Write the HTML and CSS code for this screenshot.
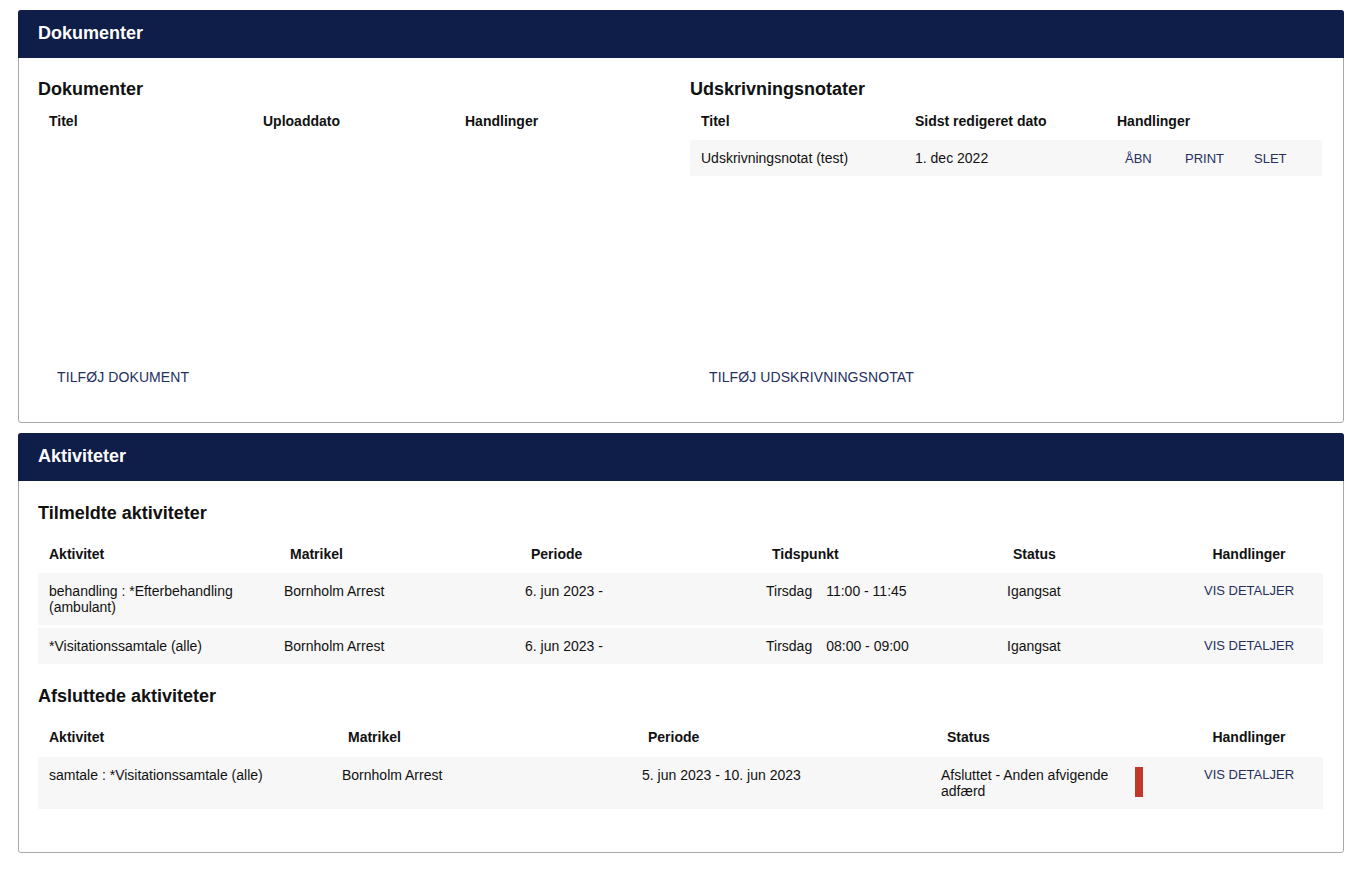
FILE: index.html
```html
<!DOCTYPE html>
<html lang="da">
<head>
<meta charset="utf-8">
<title>Dokumenter og aktiviteter</title>
<link rel="stylesheet" href="styles.css">
</head>
<body>
<section class="panel">
  <header class="panel-head">Dokumenter</header>
  <div class="panel-body docs">
    <div class="doc-col">
      <h3 class="sub">Dokumenter</h3>
      <div class="dtable">
        <div class="drow dhead"><span>Titel</span><span>Uploaddato</span><span>Handlinger</span></div>
      </div>
      <a class="add-link">TILFØJ DOKUMENT</a>
    </div>
    <div class="doc-col">
      <h3 class="sub">Udskrivningsnotater</h3>
      <div class="dtable">
        <div class="drow dhead"><span>Titel</span><span>Sidst redigeret dato</span><span>Handlinger</span></div>
        <div class="drow dbody"><span>Udskrivningsnotat (test)</span><span>1. dec 2022</span><span class="acts"><a>ÅBN</a><a>PRINT</a><a>SLET</a></span></div>
      </div>
      <a class="add-link">TILFØJ UDSKRIVNINGSNOTAT</a>
    </div>
  </div>
</section>

<section class="panel">
  <header class="panel-head">Aktiviteter</header>
  <div class="panel-body acts-body">
    <h3 class="sub">Tilmeldte aktiviteter</h3>
    <div class="atable t6">
      <div class="arow ahead"><span>Aktivitet</span><span>Matrikel</span><span>Periode</span><span>Tidspunkt</span><span>Status</span><span class="c">Handlinger</span></div>
      <div class="arow abody"><span>behandling : *Efterbehandling (ambulant)</span><span>Bornholm Arrest</span><span>6. jun 2023 -</span><span>Tirsdag<i class="sp"></i>11:00 - 11:45</span><span>Igangsat</span><span class="c"><a>VIS DETALJER</a></span></div>
      <div class="arow abody"><span>*Visitationssamtale (alle)</span><span>Bornholm Arrest</span><span>6. jun 2023 -</span><span>Tirsdag<i class="sp"></i>08:00 - 09:00</span><span>Igangsat</span><span class="c"><a>VIS DETALJER</a></span></div>
    </div>
    <h3 class="sub sub2">Afsluttede aktiviteter</h3>
    <div class="atable t5">
      <div class="arow ahead"><span>Aktivitet</span><span>Matrikel</span><span>Periode</span><span>Status</span><span class="c">Handlinger</span></div>
      <div class="arow abody"><span>samtale : *Visitationssamtale (alle)</span><span>Bornholm Arrest</span><span>5. jun 2023 - 10. jun 2023</span><span class="status"><span class="st-text">Afsluttet - Anden afvigende adfærd</span><b class="flag"></b></span><span class="c"><a>VIS DETALJER</a></span></div>
    </div>
  </div>
</section>
</body>
</html>
```

FILE: styles.css
```css
* { box-sizing: border-box; }
body {
  margin: 0;
  padding: 10px 19px 0 18px;
  background: #fff;
  font-family: "Liberation Sans", Arial, sans-serif;
  font-size: 14px;
  color: #111;
}
a { color: #25305e; text-decoration: none; cursor: pointer; }

.panel {
  border: 1px solid #a9a9a9;
  border-radius: 3px;
  margin-bottom: 10px;
  background: #fff;
}
.panel-head {
  background: #0f1e48;
  color: #fff;
  font-weight: bold;
  font-size: 18px;
  height: 48px;
  line-height: 47px;
  padding-left: 20px;
  margin: -1px -1px 0 -1px;
  border-radius: 3px 3px 0 0;
}
.panel-body { padding: 0 20px 0 19px; }

.sub {
  margin: 0;
  font-size: 18px;
  font-weight: bold;
  color: #111;
  line-height: 22px;
}

/* Dokumenter */
.docs {
  display: grid;
  grid-template-columns: 632px 632px;
  column-gap: 20px;
  padding-top: 20px;
  height: 364px;
}
.doc-col { display: flex; flex-direction: column; }
.dtable { margin-top: 2px; }
.drow {
  display: grid;
  grid-template-columns: 214px 202px 1fr;
}
.drow span { padding-left: 11px; }
.dhead { font-weight: bold; height: 38px; align-items: center; }
.dbody { background: #f7f7f7; height: 36px; align-items: center; }
.acts { display: flex; font-size: 13px; }
.acts a:nth-child(1) { margin-left: 8px; width: 60px; }
.acts a:nth-child(2) { width: 69px; }
.add-link {
  margin-top: auto;
  margin-bottom: 37px;
  padding-left: 19px;
  font-size: 14px;
  letter-spacing: 0.1px;
}

/* Aktiviteter */
.acts-body { padding-top: 21px; padding-bottom: 40px; }
.sub2 { margin-top: 21px; }
.atable { margin-top: 10px; }
.arow { display: grid; }
.t6 .arow { grid-template-columns: 241px 241px 241px 241px 174px 146px; }
.t5 .arow { grid-template-columns: 299px 300px 299px 240px 146px; }
.ahead { font-weight: bold; height: 39px; align-items: center; }
.t5 .ahead { height: 40px; }
.ahead span { padding-left: 11px; }
.abody {
  background: #f7f7f7;
  align-items: start;
  padding: 10px 0 10px;
  line-height: 16px;
  margin-bottom: 3px;
}
.abody > span { padding-left: 5px; }
.abody > span:first-child { padding-left: 11px; padding-right: 20px; }
.arow .c { text-align: center; padding-left: 0; }
.abody .c { font-size: 13px; }
.sp { display: inline-block; width: 14px; }

.status { display: flex; align-items: flex-start; }
.st-text { width: 194px; }
.flag {
  display: block;
  width: 8px;
  height: 30px;
  background: #c0392b;
}
```
